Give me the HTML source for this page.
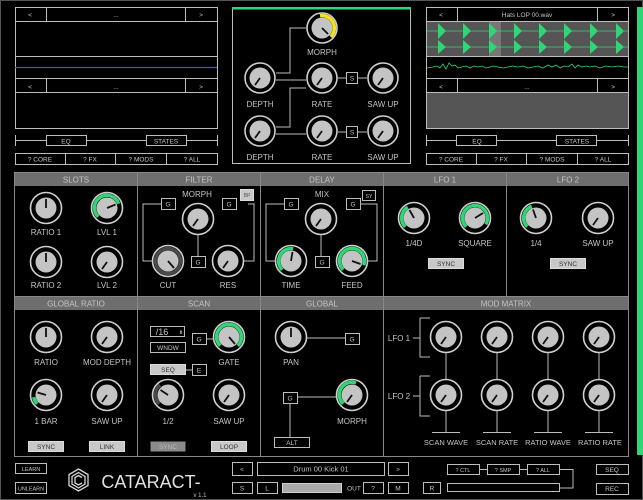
<!DOCTYPE html>
<html><head><meta charset="utf-8"><style>
html,body{margin:0;padding:0;background:#000;width:643px;height:500px;overflow:hidden}
svg{display:block}
text{font-family:"Liberation Sans",sans-serif;fill:#c4c4c4;font-size:8px;text-anchor:middle}
.s{font-size:6.5px}
.ln{stroke:#bdbdbd;stroke-width:1;fill:none}
.bx{fill:#000;stroke:#bdbdbd;stroke-width:1}
.fb{fill:#c8c8c8;stroke:#ddd;stroke-width:1}
.hd{fill:#6e6e6e}
.ko{fill:none;stroke:#cfcfcf;stroke-width:1.6}
.kd{fill:#c4c4c4}
.kp{stroke:#111;stroke-width:1.8}
.ga{fill:none;stroke:#2fd675;stroke-width:3.5}
.da{fill:none;stroke:#4a4a4a;stroke-width:3.5}
</style></head><body>
<svg width="643" height="500" viewBox="0 0 643 500">
<rect x="0.5" y="0.5" width="642" height="499" fill="#000" stroke="#555"/>
<rect x="637" y="7" width="6" height="448" fill="#2fd675"/>

<!-- top-left panel -->
<rect x="15.5" y="7.5" width="202" height="121" class="bx"/>
<line x1="46.5" y1="7" x2="46.5" y2="21" class="ln"/><line x1="185.5" y1="7" x2="185.5" y2="21" class="ln"/>
<line x1="15" y1="21.5" x2="217" y2="21.5" class="ln"/>
<text x="30" y="17" class="s">&lt;</text><text x="116" y="17" class="s">...</text><text x="201" y="17" class="s">&gt;</text>
<line x1="15" y1="56.5" x2="217" y2="56.5" class="ln"/>
<line x1="15" y1="67.5" x2="217" y2="67.5" stroke="#44589a" stroke-width="1.2"/>
<line x1="15" y1="78.5" x2="217" y2="78.5" class="ln"/>
<line x1="46.5" y1="78" x2="46.5" y2="92" class="ln"/><line x1="185.5" y1="78" x2="185.5" y2="92" class="ln"/>
<line x1="15" y1="92.5" x2="217" y2="92.5" class="ln"/>
<text x="30" y="89" class="s">&lt;</text><text x="116" y="89" class="s">...</text><text x="201" y="89" class="s">&gt;</text>
<line x1="15" y1="140.5" x2="217" y2="140.5" class="ln"/>
<line x1="15.5" y1="135" x2="15.5" y2="146" class="ln"/><line x1="217.5" y1="135" x2="217.5" y2="146" class="ln"/>
<rect x="46.5" y="135.5" width="40" height="10" class="bx"/><text x="66" y="143.5" class="s">EQ</text>
<rect x="146.5" y="135.5" width="40" height="10" class="bx"/><text x="166" y="143.5" class="s">STATES</text>
<rect x="15.5" y="153.5" width="202" height="11" class="bx"/>
<line x1="65.5" y1="153" x2="65.5" y2="164" class="ln"/><line x1="115.5" y1="153" x2="115.5" y2="164" class="ln"/><line x1="166.5" y1="153" x2="166.5" y2="164" class="ln"/>
<text x="40" y="161.5" class="s">? CORE</text><text x="90" y="161.5" class="s">? FX</text><text x="141" y="161.5" class="s">? MODS</text><text x="192" y="161.5" class="s">? ALL</text>

<!-- top-right panel -->
<rect x="426.5" y="7.5" width="202" height="121" class="bx"/>
<rect x="427" y="22" width="201" height="34" fill="#555"/>
<rect x="489" y="22" width="12" height="34" fill="#777"/>
<line x1="427" y1="31" x2="628" y2="31" stroke="#2fd675" stroke-width="0.8"/>
<line x1="427" y1="47" x2="628" y2="47" stroke="#2fd675" stroke-width="0.8"/>
<g fill="#2fd675">
<path d="M438 23L438 39L446 31Z M438 40L438 54L446 47Z"/>
<path d="M463 23L463 39L471 31Z M463 40L463 54L471 47Z"/>
<path d="M489 23L489 39L497 31Z M489 40L489 54L497 47Z"/>
<path d="M514 23L514 39L522 31Z M514 40L514 54L522 47Z"/>
<path d="M539 23L539 39L547 31Z M539 40L539 54L547 47Z"/>
<path d="M564 23L564 39L572 31Z M564 40L564 54L572 47Z"/>
<path d="M590 23L590 39L598 31Z M590 40L590 54L598 47Z"/>
<path d="M616 23L616 39L624 31Z M616 40L616 54L624 47Z"/>
</g>
<line x1="427" y1="21.5" x2="628" y2="21.5" class="ln"/>
<line x1="457.5" y1="7" x2="457.5" y2="21" class="ln"/><line x1="597.5" y1="7" x2="597.5" y2="21" class="ln"/>
<text x="441" y="17" class="s">&lt;</text><text x="527" y="17" class="s">Hats  LOP 00.wav</text><text x="613" y="17" class="s">&gt;</text>
<line x1="427" y1="56.5" x2="628" y2="56.5" class="ln"/>
<polyline points="427,68 433,67 437,66 440,68 443,64 446,69 449,63 452,66 455,65 458,68 462,67 466,66 470,68 474,66 478,67 482,66 486,68 490,67 494,66 498,67 503,68 508,67 513,66 518,67 523,66 528,68 533,67 538,66 543,68 548,65 552,67 556,65 560,68 564,66 568,67 572,64 575,68 578,65 582,67 586,66 590,67 595,66 600,68 606,66 612,67 618,66 624,67 628,67" fill="none" stroke="#2fd675" stroke-width="0.8"/>
<line x1="427" y1="78.5" x2="628" y2="78.5" class="ln"/>
<line x1="457.5" y1="78" x2="457.5" y2="92" class="ln"/><line x1="597.5" y1="78" x2="597.5" y2="92" class="ln"/>
<line x1="427" y1="92.5" x2="628" y2="92.5" class="ln"/>
<rect x="427" y="93" width="201" height="35" fill="#555"/>
<text x="441" y="89" class="s">&lt;</text><text x="527" y="89" class="s">...</text><text x="613" y="89" class="s">&gt;</text>
<line x1="426" y1="140.5" x2="628" y2="140.5" class="ln"/>
<line x1="426.5" y1="135" x2="426.5" y2="146" class="ln"/><line x1="628.5" y1="135" x2="628.5" y2="146" class="ln"/>
<rect x="456.5" y="135.5" width="40" height="10" class="bx"/><text x="477" y="143.5" class="s">EQ</text>
<rect x="556.5" y="135.5" width="40" height="10" class="bx"/><text x="577" y="143.5" class="s">STATES</text>
<rect x="426.5" y="153.5" width="202" height="11" class="bx"/>
<line x1="476.5" y1="153" x2="476.5" y2="164" class="ln"/><line x1="526.5" y1="153" x2="526.5" y2="164" class="ln"/><line x1="577.5" y1="153" x2="577.5" y2="164" class="ln"/>
<text x="451" y="161.5" class="s">? CORE</text><text x="501" y="161.5" class="s">? FX</text><text x="552" y="161.5" class="s">? MODS</text><text x="603" y="161.5" class="s">? ALL</text>

<!-- center panel -->
<rect x="232.5" y="7.5" width="178" height="156" class="bx"/>
<rect x="232" y="7" width="179" height="2.5" fill="#2fd675"/>
<path class="ln" d="M276 73H290V28H306 M276 80H306 M276 127H290V88H306 M276 134H306 M338 78H346 M357 78H367 M338 132H346 M357 132H367"/>
<rect x="346.5" y="72.5" width="11" height="11" class="bx"/><text x="352" y="80.5" class="s">S</text>
<rect x="346.5" y="126.5" width="11" height="11" class="bx"/><text x="352" y="134.5" class="s">S</text>
<g>
<circle cx="322" cy="28" r="15" class="ko"/><circle cx="322" cy="28" r="10.5" class="kd"/>
<path d="M320 15.7A12.5 12.5 0 0 1 330.8 36.8" fill="none" stroke="#f2e21a" stroke-width="3.5"/>
<line x1="322" y1="28" x2="328" y2="34" class="kp"/>
</g>
<text x="322" y="55">MORPH</text>
<g>
<circle cx="260" cy="78" r="15" class="ko"/><circle cx="260" cy="78" r="10.5" class="kd"/><line x1="260" y1="78" x2="255" y2="85" class="kp"/>
<circle cx="322" cy="78" r="15" class="ko"/><circle cx="322" cy="78" r="10.5" class="kd"/><line x1="322" y1="78" x2="317" y2="85" class="kp"/>
<circle cx="383" cy="78" r="15" class="ko"/><circle cx="383" cy="78" r="10.5" class="kd"/><line x1="383" y1="78" x2="378" y2="85" class="kp"/>
<circle cx="260" cy="131" r="15" class="ko"/><circle cx="260" cy="131" r="10.5" class="kd"/><line x1="260" y1="131" x2="255" y2="138" class="kp"/>
<circle cx="322" cy="131" r="15" class="ko"/><circle cx="322" cy="131" r="10.5" class="kd"/><line x1="322" y1="131" x2="317" y2="138" class="kp"/>
<circle cx="383" cy="131" r="15" class="ko"/><circle cx="383" cy="131" r="10.5" class="kd"/><line x1="383" y1="131" x2="378" y2="138" class="kp"/>
</g>
<text x="260" y="107">DEPTH</text><text x="322" y="107">RATE</text><text x="383" y="107">SAW UP</text>
<text x="260" y="160">DEPTH</text><text x="322" y="160">RATE</text><text x="383" y="160">SAW UP</text>

<!-- lower panel -->
<rect x="14.5" y="172.5" width="614" height="284" fill="none" stroke="#888"/>
<rect x="15" y="173" width="613" height="13" class="hd"/>
<rect x="15" y="297" width="613" height="13" class="hd"/>
<path d="M137.5 172V456 M260.5 172V456 M383.5 172V456 M506.5 172V297" stroke="#888" fill="none"/>
<line x1="14" y1="296.5" x2="629" y2="296.5" stroke="#888"/>
<g style="fill:#d0d0d0">
<text x="76" y="182.5">SLOTS</text><text x="199" y="182.5">FILTER</text><text x="322" y="182.5">DELAY</text><text x="445" y="182.5">LFO 1</text><text x="568" y="182.5">LFO 2</text>
<text x="76" y="306.5">GLOBAL RATIO</text><text x="199" y="306.5">SCAN</text><text x="322" y="306.5">GLOBAL</text><text x="506" y="306.5">MOD MATRIX</text>
</g>

<!-- SLOTS -->
<circle cx="46" cy="208" r="15.5" class="ko"/><circle cx="46" cy="208" r="10.5" class="kd"/><line x1="46" y1="208" x2="46" y2="199" class="kp"/>
<circle cx="107" cy="208" r="15.5" class="ko"/><path class="ga" d="M98.2 216.8A12.5 12.5 0 1 1 118.7 203.7"/><circle cx="107" cy="208" r="10.5" class="kd"/><line x1="107" y1="208" x2="115.5" y2="204.5" class="kp"/>
<circle cx="46" cy="262" r="15.5" class="ko"/><circle cx="46" cy="262" r="10.5" class="kd"/><line x1="46" y1="262" x2="46" y2="253" class="kp"/>
<circle cx="107" cy="262" r="15.5" class="ko"/><circle cx="107" cy="262" r="10.5" class="kd"/><line x1="107" y1="262" x2="102" y2="269" class="kp"/>
<text x="46" y="235">RATIO 1</text><text x="107" y="235">LVL 1</text><text x="46" y="288">RATIO 2</text><text x="107" y="288">LVL 2</text>

<!-- FILTER -->
<text x="197" y="197">MORPH</text>
<rect x="240.5" y="189.5" width="13" height="11" class="fb"/><text x="247" y="197" class="s" style="fill:#555;font-size:5px">BP</text>
<path class="ln" d="M161 204H143V261H152 M248 204H254V261H244 M198 235V256"/>
<circle cx="198" cy="219" r="15.5" class="ko"/><circle cx="198" cy="219" r="10.5" class="kd"/><line x1="198" y1="219" x2="193" y2="226" class="kp"/>
<rect x="161.5" y="198.5" width="14" height="11" class="bx"/><text x="168" y="206.5" class="s">G</text>
<rect x="222.5" y="198.5" width="14" height="11" class="bx"/><text x="229" y="206.5" class="s">G</text>
<rect x="191.5" y="256.5" width="14" height="11" class="bx"/><text x="198" y="264.5" class="s">G</text>
<circle cx="168" cy="261" r="15.5" class="ko"/><circle cx="168" cy="261" r="12.5" class="da"/><circle cx="168" cy="261" r="10.5" class="kd"/><line x1="168" y1="261" x2="174" y2="268" class="kp"/>
<circle cx="228" cy="261" r="15.5" class="ko"/><circle cx="228" cy="261" r="10.5" class="kd"/><line x1="228" y1="261" x2="223" y2="268" class="kp"/>
<text x="168" y="288">CUT</text><text x="228" y="288">RES</text>

<!-- DELAY -->
<text x="322" y="197">MIX</text>
<rect x="362.5" y="190.5" width="13" height="10" class="bx"/><text x="369" y="198" class="s" style="font-size:5px">SY</text>
<path class="ln" d="M284 204H266V261H276 M360 204H377V261H368 M321 235V256"/>
<circle cx="321" cy="219" r="15.5" class="ko"/><circle cx="321" cy="219" r="10.5" class="kd"/><line x1="321" y1="219" x2="316" y2="226" class="kp"/>
<rect x="284.5" y="198.5" width="14" height="11" class="bx"/><text x="291" y="206.5" class="s">G</text>
<rect x="346.5" y="198.5" width="14" height="11" class="bx"/><text x="353" y="206.5" class="s">G</text>
<rect x="315.5" y="256.5" width="14" height="11" class="bx"/><text x="322" y="264.5" class="s">G</text>
<circle cx="291" cy="261" r="15.5" class="ko"/><path class="ga" d="M282.2 269.8A12.5 12.5 0 0 1 293.2 248.7"/><circle cx="291" cy="261" r="10.5" class="kd"/><line x1="291" y1="261" x2="292.5" y2="252" class="kp"/>
<circle cx="352" cy="261" r="15.5" class="ko"/><path class="ga" d="M343.2 269.8A12.5 12.5 0 1 1 363.7 265.3"/><circle cx="352" cy="261" r="10.5" class="kd"/><line x1="352" y1="261" x2="360.5" y2="264" class="kp"/>
<text x="291" y="288">TIME</text><text x="352" y="288">FEED</text>

<!-- LFO1 -->
<circle cx="414" cy="218" r="15.5" class="ko"/><path class="ga" d="M405.2 226.8A12.5 12.5 0 0 1 407.8 207.2"/><circle cx="414" cy="218" r="10.5" class="kd"/><line x1="414" y1="218" x2="409.5" y2="210" class="kp"/>
<circle cx="475" cy="218" r="15.5" class="ko"/><path class="ga" d="M466.2 226.8A12.5 12.5 0 1 1 485.8 224.3"/><circle cx="475" cy="218" r="10.5" class="kd"/><line x1="475" y1="218" x2="483" y2="213" class="kp"/>
<text x="414" y="246">1/4D</text><text x="475" y="246">SQUARE</text>
<rect x="428.5" y="258.5" width="35" height="10" class="fb"/><text x="446" y="266" class="s" style="fill:#333">SYNC</text>
<!-- LFO2 -->
<circle cx="536" cy="218" r="15.5" class="ko"/><path class="ga" d="M527.2 226.8A12.5 12.5 0 0 1 531.7 206.3"/><circle cx="536" cy="218" r="10.5" class="kd"/><line x1="536" y1="218" x2="533" y2="209.5" class="kp"/>
<circle cx="598" cy="218" r="15.5" class="ko"/><circle cx="598" cy="218" r="10.5" class="kd"/><line x1="598" y1="218" x2="593" y2="225" class="kp"/>
<text x="536" y="246">1/4</text><text x="598" y="246">SAW UP</text>
<rect x="550.5" y="258.5" width="35" height="10" class="fb"/><text x="568" y="266" class="s" style="fill:#333">SYNC</text>

<!-- GLOBAL RATIO -->
<circle cx="46" cy="337" r="15.5" class="ko"/><circle cx="46" cy="337" r="10.5" class="kd"/><line x1="46" y1="337" x2="46" y2="328" class="kp"/>
<circle cx="107" cy="337" r="15.5" class="ko"/><circle cx="107" cy="337" r="10.5" class="kd"/><line x1="107" y1="337" x2="102" y2="344" class="kp"/>
<text x="46" y="365">RATIO</text><text x="107" y="365">MOD DEPTH</text>
<circle cx="46" cy="395" r="15.5" class="ko"/><path class="ga" d="M37.2 403.8A12.5 12.5 0 0 1 33.7 397.2"/><circle cx="46" cy="395" r="10.5" class="kd"/><line x1="46" y1="395" x2="37.5" y2="392.5" class="kp"/>
<circle cx="107" cy="395" r="15.5" class="ko"/><circle cx="107" cy="395" r="10.5" class="kd"/><line x1="107" y1="395" x2="102" y2="402" class="kp"/>
<text x="46" y="424">1 BAR</text><text x="107" y="424">SAW UP</text>
<rect x="28.5" y="441.5" width="35" height="10" class="fb"/><text x="46" y="449" class="s" style="fill:#333">SYNC</text>
<rect x="89.5" y="441.5" width="35" height="10" class="fb"/><text x="107" y="449" class="s" style="fill:#333">LINK</text>

<!-- SCAN -->
<rect x="150.5" y="326.5" width="34" height="10" class="bx"/><text x="162" y="335" style="font-size:9px">/16</text><text x="181" y="334" class="s" style="font-size:5px">⬍</text>
<rect x="150.5" y="342.5" width="35" height="10" class="bx"/><text x="168" y="350" class="s">WNDW</text>
<path class="ln" d="M206 339H213 M185 370H192"/>
<rect x="192.5" y="333.5" width="14" height="11" class="bx"/><text x="199" y="341.5" class="s">G</text>
<circle cx="229" cy="337" r="15.5" class="ko"/><path class="ga" d="M220.2 345.8A12.5 12.5 0 1 1 237.8 345.8"/><circle cx="229" cy="337" r="10.5" class="kd"/><line x1="229" y1="337" x2="235" y2="344" class="kp"/>
<text x="229" y="365">GATE</text>
<rect x="150.5" y="364.5" width="35" height="10" class="fb"/><text x="168" y="372" class="s" style="fill:#333">SEQ</text>
<rect x="192.5" y="364.5" width="14" height="11" class="bx"/><text x="199" y="372.5" class="s">E</text>
<circle cx="168" cy="395" r="15.5" class="ko"/><path class="da" d="M159.2 403.8A12.5 12.5 0 0 1 160 385"/><circle cx="168" cy="395" r="10.5" class="kd"/><line x1="168" y1="395" x2="160.5" y2="390" class="kp"/>
<circle cx="229" cy="395" r="15.5" class="ko"/><circle cx="229" cy="395" r="10.5" class="kd"/><line x1="229" y1="395" x2="224" y2="402" class="kp"/>
<text x="168" y="424">1/2</text><text x="229" y="424">SAW UP</text>
<rect x="150.5" y="441.5" width="35" height="10" fill="#8a8a8a"/><text x="168" y="449" class="s" style="fill:#bbb">SYNC</text>
<rect x="211.5" y="441.5" width="35" height="10" class="fb"/><text x="229" y="449" class="s" style="fill:#333">LOOP</text>

<!-- GLOBAL -->
<path class="ln" d="M307 338H345 M297 397H336 M290 403V437"/>
<circle cx="291" cy="337" r="15.5" class="ko"/><circle cx="291" cy="337" r="10.5" class="kd"/><line x1="291" y1="337" x2="291" y2="328" class="kp"/>
<text x="291" y="365">PAN</text>
<rect x="345.5" y="333.5" width="14" height="11" class="bx"/><text x="352" y="341.5" class="s">G</text>
<rect x="283.5" y="392.5" width="14" height="11" class="bx"/><text x="290" y="400.5" class="s">G</text>
<circle cx="352" cy="395" r="15.5" class="ko"/><path class="ga" d="M343.2 403.8A12.5 12.5 0 0 1 356 383"/><circle cx="352" cy="395" r="10.5" class="kd"/><line x1="352" y1="395" x2="347" y2="402" class="kp"/>
<text x="352" y="424">MORPH</text>
<rect x="274.5" y="437.5" width="35" height="10" class="bx"/><text x="292" y="445" class="s">ALT</text>

<!-- MOD MATRIX -->
<text x="399" y="341">LFO 1</text><text x="399" y="399">LFO 2</text>
<path class="ln" d="M413 338H420 M420 318H430 M420 318V357H430 M413 396H420 M420 376H430 M420 376V416H430"/>
<path class="ln" d="M446 353V379 M497 353V379 M548 353V379 M599 353V379 M446 411V432 M497 411V432 M548 411V432 M599 411V432 M432 432.5H460 M483 432.5H511 M534 432.5H562 M585 432.5H613"/>
<g>
<circle cx="446" cy="337" r="15.5" class="ko"/><circle cx="446" cy="337" r="10.5" class="kd"/><line x1="446" y1="337" x2="441" y2="344" class="kp"/>
<circle cx="497" cy="337" r="15.5" class="ko"/><circle cx="497" cy="337" r="10.5" class="kd"/><line x1="497" y1="337" x2="492" y2="344" class="kp"/>
<circle cx="548" cy="337" r="15.5" class="ko"/><circle cx="548" cy="337" r="10.5" class="kd"/><line x1="548" y1="337" x2="543" y2="344" class="kp"/>
<circle cx="599" cy="337" r="15.5" class="ko"/><circle cx="599" cy="337" r="10.5" class="kd"/><line x1="599" y1="337" x2="594" y2="344" class="kp"/>
<circle cx="446" cy="395" r="15.5" class="ko"/><circle cx="446" cy="395" r="10.5" class="kd"/><line x1="446" y1="395" x2="441" y2="402" class="kp"/>
<circle cx="497" cy="395" r="15.5" class="ko"/><circle cx="497" cy="395" r="10.5" class="kd"/><line x1="497" y1="395" x2="492" y2="402" class="kp"/>
<circle cx="548" cy="395" r="15.5" class="ko"/><circle cx="548" cy="395" r="10.5" class="kd"/><line x1="548" y1="395" x2="543" y2="402" class="kp"/>
<circle cx="599" cy="395" r="15.5" class="ko"/><circle cx="599" cy="395" r="10.5" class="kd"/><line x1="599" y1="395" x2="594" y2="402" class="kp"/>
</g>
<g style="font-size:7.5px">
<text x="446" y="445" style="font-size:7.5px">SCAN WAVE</text><text x="497" y="445" style="font-size:7.5px">SCAN RATE</text><text x="548" y="445" style="font-size:7.5px">RATIO WAVE</text><text x="600" y="445" style="font-size:7.5px">RATIO RATE</text>
</g>

<!-- bottom bar -->
<rect x="15.5" y="463.5" width="31" height="10" class="bx"/><text x="31" y="471" class="s" style="font-size:5.5px">LEARN</text>
<rect x="15.5" y="482.5" width="31" height="11" class="bx"/><text x="31" y="490.5" class="s" style="font-size:5.5px">UNLEARN</text>
<g fill="none" stroke="#d8d8d8" stroke-width="1.3">
<path d="M78.5 469L88 474.5V485.5L78.5 491L69 485.5V474.5Z"/>
<path d="M78.5 472.5L85 476.5V484L78.5 488L72 484V476.5Z"/>
<path d="M82 477.5L78.5 475.5L75 477.5V483L78.5 485L82 483"/>
</g>
<text x="151" y="488" style="font-size:18px;text-anchor:middle;fill:#e0e0e0">CATARACT-</text>
<text x="200" y="497" class="s" style="font-size:6px">v 1.1</text>
<rect x="232.5" y="462.5" width="20" height="13" class="bx"/><text x="242" y="471.5" class="s">&lt;</text>
<rect x="257.5" y="462.5" width="127" height="13" class="bx"/><text x="321" y="471.5" style="font-size:7.5px">Drum 00 Kick 01</text>
<rect x="388.5" y="462.5" width="20" height="13" class="bx"/><text x="398" y="471.5" class="s">&gt;</text>
<rect x="232.5" y="482.5" width="20" height="11" class="bx"/><text x="242" y="490.5" class="s">S</text>
<rect x="257.5" y="482.5" width="20" height="11" class="bx"/><text x="267" y="490.5" class="s">L</text>
<rect x="282.5" y="483.5" width="59" height="9" fill="#aaa" stroke="#ccc"/>
<text x="354" y="490.5" class="s">OUT</text>
<rect x="363.5" y="482.5" width="20" height="11" class="bx"/><text x="373" y="490.5" class="s">?</text>
<rect x="388.5" y="482.5" width="20" height="11" class="bx"/><text x="398" y="490.5" class="s">M</text>
<rect x="423.5" y="482.5" width="17" height="11" class="bx"/><text x="432" y="490.5" class="s">R</text>
<path class="ln" d="M479 469.5H487 M519 469.5H527 M559 469.5H573V488H559"/>
<rect x="447.5" y="464.5" width="32" height="10" class="bx"/><text x="463" y="472" class="s" style="font-size:5.5px">? CTL</text>
<rect x="487.5" y="464.5" width="32" height="10" class="bx"/><text x="503" y="472" class="s" style="font-size:5.5px">? SMP</text>
<rect x="527.5" y="464.5" width="32" height="10" class="bx"/><text x="543" y="472" class="s" style="font-size:5.5px">? ALL</text>
<rect x="447.5" y="483.5" width="112" height="8" class="bx"/>
<rect x="596.5" y="464.5" width="32" height="10" class="bx"/><text x="612" y="472" class="s">SEQ</text>
<rect x="596.5" y="483.5" width="32" height="11" class="bx"/><text x="612" y="491" class="s">REC</text>
</svg>
</body></html>
